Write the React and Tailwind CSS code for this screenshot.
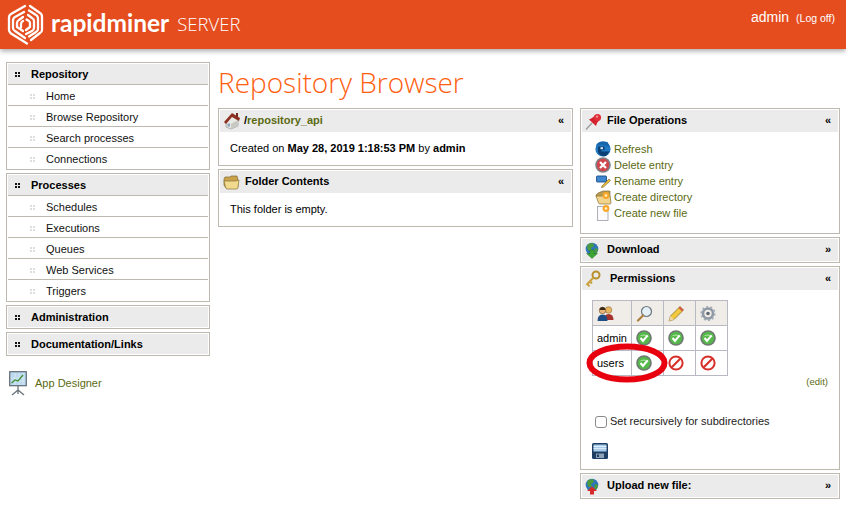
import React from "react";

const Logo = () => (
  <svg width="37" height="42" viewBox="0 0 37 42" fill="none" stroke="#fff" strokeWidth="2.3" strokeLinejoin="round" strokeLinecap="round" className="shrink-0">
    <path d="M18 2 L4 10 Q2 11 2 14 V26 Q2 28 4 29.5 L20 39.5" />
    <path d="M23 2 L33 9 Q35 10 35 13 V26 Q35 28 33 29 L24 36" />
    <path d="M17 8 L8 13 Q6 14 6 17 V24 Q6 26 8 27 L18 34" />
    <path d="M22 6.5 L29 11 Q31 12 31 15 V25 Q31 27 29 28 L22 32.5" />
    <path d="M21 11 L25 14 Q27 15 27 17 V24 Q27 26 25 27 L19 30" />
    <path d="M16 13 L12 16 Q10 17 10 19 V23 L16 27" />
    <path d="M14 23.5 V20 Q14 18 16 17" />
    <path d="M19.5 15.5 L22 17 Q23 18 23 19 V23 L19 26" />
  </svg>
);

const Grip = ({ dark }) => (
  <svg width="5" height="5" viewBox="0 0 5 5" className="shrink-0">
    <g fill={dark ? "#111" : "#dedede"}>
      <rect x="0" y="0" width="2" height="2" />
      <rect x="3" y="0" width="2" height="2" />
      <rect x="0" y="3" width="2" height="2" />
      <rect x="3" y="3" width="2" height="2" />
    </g>
  </svg>
);

const Home = () => (
  <svg width="18" height="18" viewBox="0 0 18 18">
    <path d="M3 9 L9 4 L15 8 V14 L8 17 L3 15Z" fill="#e8e8e4" stroke="#888" strokeWidth=".6" />
    <path d="M8 17 L15 14 V8 L8 12Z" fill="#c9c9c4" />
    <path d="M1 10 L9 1 L17 6 L16 9 L9 5 L3 12Z" fill="#8d3022" />
    <rect x="13" y="1" width="2" height="4" fill="#70291d" />
    <rect x="4.5" y="11.5" width="2.5" height="3" fill="#8aa0b8" />
  </svg>
);

const Folder = () => (
  <svg width="17" height="15" viewBox="0 0 17 15">
    <path d="M1 4 L2 2 H7 L8 1 H14 L15 5 V12 L3 13 L1 10Z" fill="#c9a24b" stroke="#7d6a35" strokeWidth=".7" />
    <path d="M1 6 H13 L16 5 L15 12 Q15 14 14 14 H4 Q3 14 2.5 12Z" fill="#f1d98e" stroke="#8a7236" strokeWidth=".7" />
  </svg>
);

const Pin = () => (
  <svg width="17" height="17" viewBox="0 0 17 17">
    <path d="M1 16.5 L7 10" stroke="#999" strokeWidth="1.2" />
    <path d="M4 6.5 L11 13 L12 10 L14.5 7 L10 2.5 L7 5Z" fill="#d3202c" />
    <circle cx="12.5" cy="4.5" r="3.6" fill="#e02f3a" />
    <circle cx="12" cy="3.7" r="1.1" fill="#f59aa0" />
  </svg>
);

const Refresh = () => (
  <svg width="16" height="16" viewBox="0 0 16 16">
    <circle cx="8" cy="8" r="7.6" fill="#1f78c0" />
    <path d="M0.8 5 Q2 0.5 8 0.4 L12.5 1 L15 6 L7 3.5 L3 4Z" fill="#1565ab" />
    <path d="M3 5.5 H9.5 V9 H6.5 V10.5 H14.5 L11 15 Q5 16 3 11Z" fill="#0c3f73" />
    <rect x="5.5" y="6.2" width="2.5" height="2" fill="#d7eaf8" />
  </svg>
);

const DeleteIc = () => (
  <svg width="16" height="16" viewBox="0 0 16 16">
    <circle cx="8" cy="8" r="7.8" fill="#7d8488" />
    <circle cx="8" cy="8" r="6.2" fill="#d0444b" />
    <path d="M5 5 L11 11 M11 5 L5 11" stroke="#fff" strokeWidth="2.2" />
  </svg>
);

const RenameIc = () => (
  <svg width="16" height="14" viewBox="0 0 16 14">
    <rect x="1.5" y="2" width="10" height="6" rx=".8" fill="#3f86d0" stroke="#1d4f87" strokeWidth=".9" />
    <path d="M7 12 L14 5 L15.5 6.5 L8.5 13 L6.5 13.5Z" fill="#eec23c" stroke="#6f5a1b" strokeWidth=".6" />
  </svg>
);

const NewFolder = () => (
  <svg width="17" height="15" viewBox="0 0 17 15">
    <path d="M1 5 L3 3 L8 1 L15 1 V12 L1 6Z" fill="#b89a50" stroke="#776430" strokeWidth=".6" />
    <path d="M1 6 H15 L16 13 Q16 14 15 14 H5 Q4 14 3.5 13Z" fill="#f1d48c" stroke="#8a7236" strokeWidth=".7" />
    <circle cx="11" cy="5.5" r="3.4" fill="#f8a72c" />
    <circle cx="11" cy="5.5" r="1.3" fill="#fff3c2" />
  </svg>
);

const NewFile = () => (
  <svg width="14" height="16" viewBox="0 0 14 16">
    <rect x="1.5" y="1.5" width="10.5" height="14" fill="#fbfbfb" stroke="#9a9ea6" strokeWidth=".8" />
    <circle cx="10" cy="3.5" r="3.4" fill="#f8a72c" />
    <circle cx="10" cy="3.5" r="1.3" fill="#fff3c2" />
  </svg>
);

const Globe = ({ up }) => (
  <svg width="14" height="17" viewBox="0 0 14 17">
    <circle cx="7" cy="7" r="6.3" fill="#2f76b8" />
    <path d="M3 2 L8 1 L9 4 L6 6 L7 9 L4 9 L2 6Z M10 6 L13 7 L12 11 L9 11Z" fill="#4a9b3e" />
    {up ? (
      <path d="M7 8.5 L12 13 H9 V16.5 H5 V13 H2Z" fill="#d52a2a" />
    ) : (
      <path d="M5 8 H9 V11.5 H12.5 L7 16.5 L1.5 11.5 H5Z" fill="#3aa534" stroke="#24691f" strokeWidth=".4" />
    )}
  </svg>
);

const Key = () => (
  <svg width="16" height="18" viewBox="0 0 16 18" fill="none">
    <circle cx="11" cy="5" r="3.5" stroke="#b98f2e" strokeWidth="2" />
    <path d="M8.5 7.5 L1.5 15 M2.5 14 L4.5 16.5 M5 11.5 L7 13.5" stroke="#c9a13c" strokeWidth="2" />
  </svg>
);

const Users = () => (
  <svg width="17" height="15" viewBox="0 0 17 15">
    <circle cx="11.5" cy="4" r="3.3" fill="#e7b65e" stroke="#7c5a1c" strokeWidth=".5" />
    <path d="M7 14 Q7 8 11.5 8 Q16.5 8 16.5 14Z" fill="#a5332d" />
    <circle cx="5.5" cy="4.5" r="3.3" fill="#e9b678" stroke="#50381c" strokeWidth=".5" />
    <path d="M2.5 4 Q3 1 5.5 1 Q8 1 8.5 4Z" fill="#3a2a18" />
    <path d="M0.5 15 Q0.5 8.5 5.5 8.5 Q10.5 8.5 10.5 15Z" fill="#1e4d86" />
  </svg>
);

const Magnifier = () => (
  <svg width="17" height="17" viewBox="0 0 17 17" fill="none">
    <circle cx="10.5" cy="6.5" r="5" fill="#e4f0f6" stroke="#6b7781" strokeWidth="1.2" />
    <path d="M7 10.5 L2 15.5" stroke="#a97f3e" strokeWidth="2.2" strokeLinecap="round" />
  </svg>
);

const Pencil = () => (
  <svg width="17" height="17" viewBox="0 0 17 17">
    <path d="M1 16 L2.5 11 L12 1.5 L15.5 5 L6 14.5Z" fill="#f2c93e" stroke="#7c6a20" strokeWidth=".7" />
    <path d="M1 16 L2.5 11 L6 14.5Z" fill="#eed6a6" />
    <path d="M12 1.5 L15.5 5 L14 6.5 L10.5 3Z" fill="#d8574c" />
  </svg>
);

const Gear = () => (
  <svg width="16" height="17" viewBox="0 0 16 17" fill="none">
    <circle cx="8" cy="8.5" r="5" stroke="#8e98a4" strokeWidth="2.6" />
    <circle cx="8" cy="8.5" r="6.6" stroke="#a2acb7" strokeWidth="2" strokeDasharray="2 2.15" />
    <circle cx="8" cy="8.5" r="1.8" fill="#5f6872" />
  </svg>
);

const Check = () => (
  <svg width="16" height="16" viewBox="0 0 16 16" className="block">
    <circle cx="8" cy="8" r="7.8" fill="#6f7872" />
    <circle cx="8" cy="8" r="6.2" fill="#55b84a" />
    <path d="M3 6.5 Q8 2.5 13 6.5 Q8 5 3 6.5Z" fill="#a5e09a" />
    <path d="M4.5 8 L7 10.8 L11.7 5.4" stroke="#fff" strokeWidth="2.1" fill="none" />
  </svg>
);

const Deny = () => (
  <svg width="16" height="16" viewBox="0 0 16 16" className="block" fill="none">
    <circle cx="8" cy="8" r="6.6" fill="#fff" stroke="#d7302a" strokeWidth="2" />
    <path d="M3.5 12.5 L12.5 3.5" stroke="#d7302a" strokeWidth="2.2" />
  </svg>
);

const Save = () => (
  <svg width="16" height="16" viewBox="0 0 16 16" className="block">
    <rect x="0" y="0" width="16" height="16" rx="1.5" fill="#1e3f63" />
    <rect x="1.5" y="1.5" width="13" height="7" fill="#a9cdea" />
    <path d="M1.5 3.5 H14.5 M1.5 5.5 H14.5" stroke="#e8f3fb" strokeWidth=".8" />
    <rect x="4" y="10.5" width="8" height="4.5" fill="#8fa3b6" />
    <rect x="5" y="11.5" width="2" height="2.5" fill="#1e3f63" />
  </svg>
);

const AppDesigner = () => (
  <svg width="18" height="25" viewBox="0 0 18 25" className="shrink-0">
    <rect x="0.7" y="0.7" width="16.6" height="14" fill="#bcd9ee" stroke="#5f6a74" strokeWidth="1.2" />
    <path d="M2 7 H16 M2 10 H16 M6 2 V14 M10 2 V14 M14 2 V14" stroke="#e2f0f9" strokeWidth=".6" />
    <path d="M2.5 12 L6 9 L9 10 L14 4" stroke="#3f8f2f" strokeWidth="1.2" fill="none" />
    <path d="M9 15 V19 M9 19 L3 24 M9 19 L15 24 M9 19 V23" stroke="#6b737a" strokeWidth="1.3" fill="none" />
  </svg>
);

const NavGroup = ({ title, items }) => (
  <div className="border border-[#bdb9af] p-px mb-[3px]">
    <div className="flex items-center h-[20px] bg-[#ebebeb] font-bold text-[11px] text-black">
      <span className="w-[23px] pl-[7px] flex"><Grip dark /></span>
      {title}
    </div>
    {items &&
      items.map((it) => (
        <div key={it} className="flex items-center h-[21px] border-t border-[#bdb9af] text-[11px] text-[#111] pt-[3px] first:mt-px">
          <span className="w-[38px] pl-[22px] flex"><Grip /></span>
          {it}
        </div>
      ))}
  </div>
);

const PanelHead = ({ icon, title, arrow, iconW = "w-[22px]" }) => (
  <div className="flex items-center h-[22px] bg-[#ebebeb] font-bold text-[11px] text-black pr-[7px] pl-[3px]">
    <span className={`${iconW} flex shrink-0`}>{icon}</span>
    <span className="flex-1 min-w-0 pb-[2px]">{title}</span>
    <span className="text-[11px] leading-none pb-[2px]">{arrow}</span>
  </div>
);

const Panel = ({ icon, title, arrow, iconW, children, className = "" }) => (
  <div className={`border border-[#bdb9af] p-px ${className}`}>
    <PanelHead icon={icon} title={title} arrow={arrow} iconW={iconW} />
    {children}
  </div>
);

const Op = ({ icon, label }) => (
  <div className="flex items-center h-[16px]">
    <span className="w-[22px] flex justify-center shrink-0">{icon}</span>
    {label}
  </div>
);

const Cell = ({ children }) => (
  <td className="border border-[#b9b9c4] pl-[4px] align-middle text-black">{children}</td>
);

export default function App() {
  return (
    <div className="w-[846px] h-[509px] overflow-hidden bg-white text-[11px] text-black font-['Liberation_Sans',Arial,sans-serif]">
      <header className="relative flex items-center h-[49px] bg-[#e54d1f] shadow-[0_2px_5px_rgba(0,0,0,0.35)] text-white pl-[7px] pr-[11px]">
        <Logo />
        <span className="ml-[7px] text-[24.5px] font-['Lato',sans-serif] font-bold leading-none pb-[3px]">rapidminer</span>
        <span className="ml-[8px] text-[18.5px] font-['Open_Sans',sans-serif] font-light leading-none">SERVER</span>
        <div className="ml-auto self-start pt-[7px] flex items-baseline gap-[7px]">
          <span className="text-[14px]">admin</span>
          <span className="text-[10.5px]">(Log off)</span>
        </div>
      </header>
      <div className="flex pt-[13px] pl-[6px]">
        <aside className="w-[204px] shrink-0">
          <NavGroup title="Repository" items={["Home", "Browse Repository", "Search processes", "Connections"]} />
          <NavGroup title="Processes" items={["Schedules", "Executions", "Queues", "Web Services", "Triggers"]} />
          <NavGroup title="Administration" />
          <NavGroup title="Documentation/Links" />
          <div className="flex items-center pl-[3px] mt-[15px] text-[#5b6a12]">
            <AppDesigner />
            <span className="ml-[8px]">App Designer</span>
          </div>
        </aside>
        <main className="w-[355px] ml-[8px] shrink-0">
          <h1 className="h-[46px] font-['Open_Sans',sans-serif] font-light text-[28px] leading-[40px] text-[#ff6010]">Repository Browser</h1>
          <Panel
            icon={<Home />}
            iconW="w-[21px]"
            title={<span>/<span className="text-[#5b6a12]">repository_api</span></span>}
            arrow="«"
            className="h-[58px] mb-[3px]"
          >
            <div className="pl-[10px] pt-[8px]">
              Created on <b>May 28, 2019 1:18:53 PM</b> by <b>admin</b>
            </div>
          </Panel>
          <Panel icon={<Folder />} title="Folder Contents" arrow="«" className="h-[58px]">
            <div className="pl-[10px] pt-[8px]">This folder is empty.</div>
          </Panel>
        </main>
        <section className="w-[260px] ml-[7px] shrink-0 pt-[46px]">
          <Panel icon={<Pin />} title="File Operations" arrow="«" className="h-[126px] mb-[3px]">
            <div className="pl-[10px] pt-[9px] text-[#5b6a12]">
              <Op icon={<Refresh />} label="Refresh" />
              <Op icon={<DeleteIc />} label="Delete entry" />
              <Op icon={<RenameIc />} label="Rename entry" />
              <Op icon={<NewFolder />} label="Create directory" />
              <Op icon={<NewFile />} label="Create new file" />
            </div>
          </Panel>
          <Panel icon={<Globe />} title="Download" arrow="»" className="mb-[3px] h-[26px]" />
          <Panel icon={<Key />} title={<span className="pl-[3px]">Permissions</span>} arrow="«" className="h-[204px] mb-[3px]">
            <div className="relative pl-[10px] pt-[10px]">
              <table className="border-collapse table-fixed w-[135px] text-[11px]">
                <colgroup>
                  <col className="w-[39px]" />
                  <col className="w-[32px]" />
                  <col className="w-[32px]" />
                  <col className="w-[32px]" />
                </colgroup>
                <tbody>
                  <tr className="h-[25px] bg-[#f0ece8]">
                    <Cell><Users /></Cell>
                    <Cell><Magnifier /></Cell>
                    <Cell><Pencil /></Cell>
                    <Cell><Gear /></Cell>
                  </tr>
                  <tr className="h-[25px]">
                    <Cell>admin</Cell>
                    <Cell><Check /></Cell>
                    <Cell><Check /></Cell>
                    <Cell><Check /></Cell>
                  </tr>
                  <tr className="h-[25px]">
                    <Cell>users</Cell>
                    <Cell><Check /></Cell>
                    <Cell><Deny /></Cell>
                    <Cell><Deny /></Cell>
                  </tr>
                </tbody>
              </table>
              <svg width="82" height="40" viewBox="0 0 82 40" fill="none" className="absolute left-[4px] top-[53px]">
                <ellipse cx="41" cy="20" rx="37.5" ry="16.5" stroke="#e8000f" strokeWidth="6" />
              </svg>
              <div className="text-right pr-[10px] -mt-[1px] text-[9.5px] text-[#5b6a12]">(edit)</div>
              <label className="flex items-center mt-[24px] pl-[3px] text-[#222]">
                <span className="w-[12px] h-[12px] rounded-[3px] border border-[#8a8a8a] bg-white mr-[3px]" />
                Set recursively for subdirectories
              </label>
              <div className="mt-[13px]"><Save /></div>
            </div>
          </Panel>
          <Panel icon={<Globe up />} title="Upload new file:" arrow="»" className="h-[26px]" />
        </section>
      </div>
    </div>
  );
}
